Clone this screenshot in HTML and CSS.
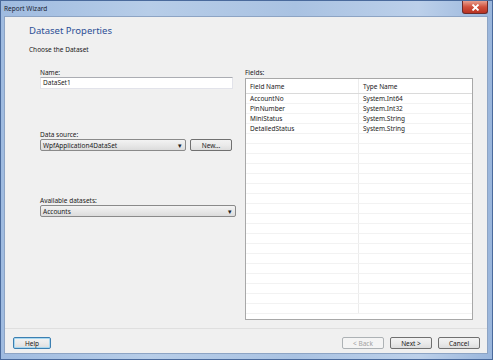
FILE: index.html
```html
<!DOCTYPE html>
<html>
  <head>
    <link rel="stylesheet" href="styles.css">
  </head>
  <body>
    <div class="window">
      <!-- Title bar -->
      <div class="titlebar">
        <span class="title">Report Wizard</span>
        <div class="close-btn">
          <svg width="9" height="7" viewBox="0 0 9 7">
            <path d="M1.5 0.5 L7.5 6.5 M7.5 0.5 L1.5 6.5" stroke="#ffffff" stroke-width="1.8" />
          </svg>
        </div>
      </div>

      <!-- Client area -->
      <div class="client">
        <div class="header">
          <div class="page-title">Dataset Properties</div>
          <div class="page-sub">Choose the Dataset</div>
        </div>

        <div class="body">
          <div class="left-col">
            <div class="label">Name:</div>
            <div class="textbox">DataSet1</div>

            <div class="label source-label">Data source:</div>
            <div class="source-row">
              <div class="combo source-combo">
                <span>WpfApplication4DataSet</span>
                <span class="arrow">▾</span>
              </div>
              <div class="button new-btn">New...</div>
            </div>

            <div class="label datasets-label">Available datasets:</div>
            <div class="combo">
              <span>Accounts</span>
              <span class="arrow">▾</span>
            </div>
          </div>

          <div class="right-col">
            <div class="label">Fields:</div>
            <div class="grid">
              <div class="grid-row grid-head">
                <div class="cell name-cell">Field Name</div>
                <div class="cell">Type Name</div>
              </div>
              <div id="rows"></div>
            </div>
          </div>
        </div>

        <div class="footer">
          <div class="button help-btn">Help</div>
          <div class="footer-right">
            <div class="button disabled">&lt; Back</div>
            <div class="button">Next &gt;</div>
            <div class="button">Cancel</div>
          </div>
        </div>
      </div>
    </div>

    <script>
      const fields = [
        ["AccountNo", "System.Int64"],
        ["PinNumber", "System.Int32"],
        ["MiniStatus", "System.String"],
        ["DetailedStatus", "System.String"],
      ];

      const rows = document.getElementById("rows");
      for (let i = 0; i < 22; i++) {
        const row = document.createElement("div");
        row.className = "grid-row";
        const f = fields[i] || ["", ""];
        row.innerHTML =
          '<div class="cell name-cell">' + f[0] + '</div><div class="cell">' + f[1] + "</div>";
        rows.appendChild(row);
      }
    </script>
  </body>
</html>
```

FILE: styles.css
```css
* {
  margin: 0;
  padding: 0;
  box-sizing: border-box;
}

body {
  width: 493px;
  height: 360px;
  overflow: hidden;
  font-family: "Noto Sans", "Open Sans", sans-serif;
  font-size: 6.5px;
  color: #1a1a1a;
}

.window {
  width: 493px;
  height: 360px;
  display: flex;
  flex-direction: column;
  background: linear-gradient(90deg, #9fbbe0 0%, #b7cde8 30%, #a9c2e2 60%, #bcd0ea 85%, #9ab6dc 100%);
  border: 1px solid #4a6a9c;
}

.titlebar {
  height: 15px;
  display: flex;
  align-items: center;
  justify-content: space-between;
  padding-left: 3px;
}

.title {
  font-size: 6.5px;
  color: #1a2433;
}

.close-btn {
  width: 26px;
  height: 13px;
  margin-top: -2px;
  margin-right: 4px;
  border: 1px solid #6b2a2a;
  border-top: none;
  border-radius: 0 0 3px 3px;
  background: linear-gradient(#e8a090, #d0503c 50%, #b83222);
  display: flex;
  align-items: center;
  justify-content: center;
}

.client {
  flex: 1;
  margin: 0 4px 5px 3px;
  background: #f0f0f0;
  border: 1px solid #8da4c4;
  display: flex;
  flex-direction: column;
}

.header {
  padding: 7px 0 0 24px;
}

.page-title {
  font-size: 9.5px;
  line-height: 13px;
  color: #2c4f96;
}

.page-sub {
  margin-top: 8px;
  line-height: 10px;
}

.body {
  flex: 1;
  display: flex;
  gap: 9px;
  padding: 13px 0 0 35px;
}

.left-col {
  width: 196px;
  display: flex;
  flex-direction: column;
}

.label {
  line-height: 9px;
}

.textbox {
  height: 12px;
  width: 193px;
  background: #ffffff;
  border: 1px solid #e2e3ea;
  border-top-color: #abadb3;
  line-height: 10px;
  padding-left: 2px;
}

.source-label {
  margin-top: 41px;
}

.source-row {
  display: flex;
  gap: 4px;
}

.combo {
  height: 12px;
  background: linear-gradient(#f3f3f3, #e8e8e8 50%, #dcdcdc);
  border: 1px solid #8a8a8a;
  border-radius: 2px;
  display: flex;
  justify-content: space-between;
  align-items: center;
  padding: 0 3px 0 2px;
}

.source-combo {
  width: 146px;
}

.arrow {
  font-size: 7px;
  color: #222;
}

.datasets-label {
  margin-top: 45px;
}

.button {
  height: 12px;
  width: 42px;
  background: linear-gradient(#f2f2f2, #ebebeb 50%, #dddddd);
  border: 1px solid #707070;
  border-radius: 2px;
  display: flex;
  align-items: center;
  justify-content: center;
}

.new-btn {
  width: 42px;
}

.button.disabled {
  color: #a3a3a3;
  background: #f4f4f4;
  border-color: #adb2b5;
}

.help-btn {
  width: 38px;
  border-color: #3c7fb1;
  box-shadow: inset 0 0 0 1px #a8d8f0;
}

.right-col {
  width: 228px;
  display: flex;
  flex-direction: column;
}

.grid {
  margin-top: 1px;
  height: 242px;
  background: #ffffff;
  border: 1px solid #a8a8a8;
  overflow: hidden;
}

.grid-row {
  display: flex;
  height: 10px;
  border-bottom: 1px solid #f2f2f2;
}

.grid-head {
  height: 15px;
  border-bottom: 1px solid #dadada;
}

.cell {
  flex: 1;
  line-height: 9px;
  padding-left: 4px;
  display: flex;
  align-items: center;
}

.name-cell {
  flex: 0 0 113px;
  border-right: 1px solid #ececec;
}

.footer {
  height: 25px;
  border-top: 1px solid #dfdfdf;
  display: flex;
  justify-content: space-between;
  align-items: flex-start;
  padding: 8px 7px 0 8px;
}

.footer-right {
  display: flex;
  gap: 6px;
}
```
